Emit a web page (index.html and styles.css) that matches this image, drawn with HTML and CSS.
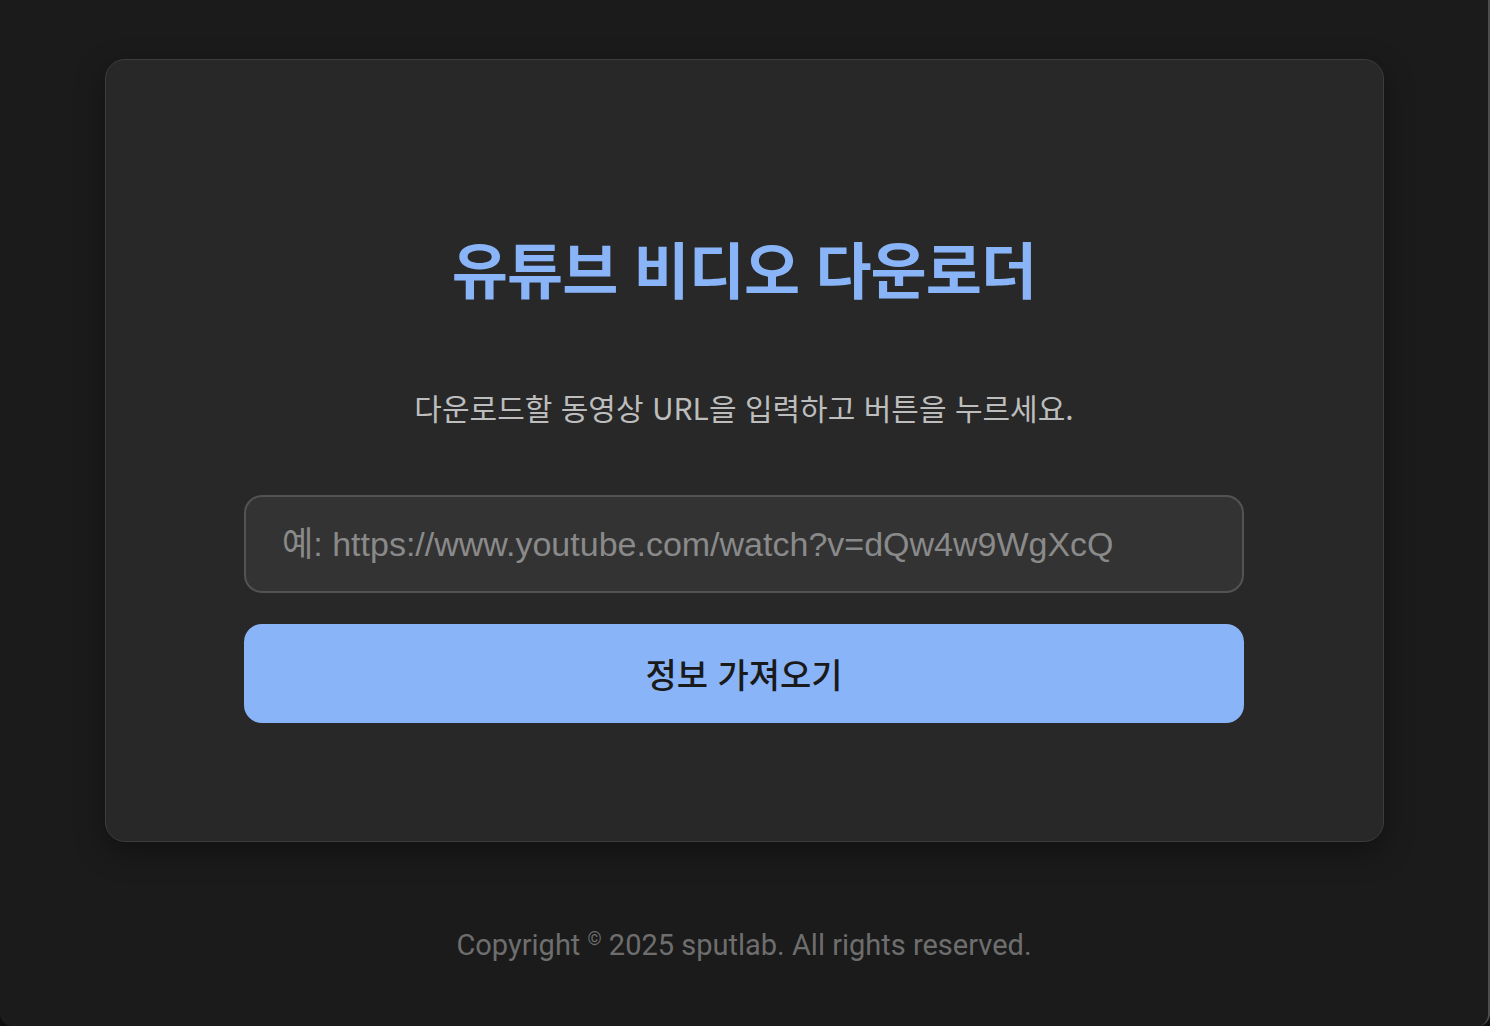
FILE: index.html
```html
<!DOCTYPE html>
<html lang="ko">
<head>
<meta charset="utf-8">
<title>유튜브 비디오 다운로더</title>
<link rel="stylesheet" href="styles.css">
</head>
<body>
<div class="window">
  <main class="card">
    <h1 class="title">유튜브 비디오 다운로더</h1>
    <p class="subtitle">다운로드할 동영상 URL을 입력하고 버튼을 누르세요.</p>
    <form class="form">
      <input class="url-input" type="text" placeholder="예: https://www.youtube.com/watch?v=dQw4w9WgXcQ">
      <button class="fetch-btn" type="button">정보 가져오기</button>
    </form>
  </main>
  <footer class="footer">Copyright <span class="copy">©</span> 2025 sputlab. All rights reserved.</footer>
</div>
</body>
</html>
```
FILE: styles.css
```css
html, body {
  margin: 0;
  padding: 0;
  background: #0e0e0e;
}
.window {
  box-sizing: border-box;
  min-height: 100vh;
  background: #1b1b1b;
  border-right: 2px solid #4d4d4d;
  border-bottom-left-radius: 12px;
  border-bottom-right-radius: 12px;
  display: flex;
  flex-direction: column;
  align-items: center;
  padding-top: 59px;
  font-family: "Noto Sans CJK KR", "Noto Sans", sans-serif;
}
.card {
  box-sizing: border-box;
  width: 1279px;
  background: #282828;
  border: 1px solid #3c3c3c;
  border-radius: 20px;
  box-shadow: 0 10px 30px rgba(0, 0, 0, 0.35);
  padding: 172px 0 118px;
  display: flex;
  flex-direction: column;
  align-items: center;
}
.title {
  margin: 0;
  font-size: 61px;
  line-height: 72px;
  font-weight: 700;
  color: #8ab4f8;
  letter-spacing: -0.9px;
}
.subtitle {
  margin: 83px 0 0;
  font-size: 30px;
  line-height: 40px;
  color: #bdbdbd;
  letter-spacing: 0;
}
.form {
  margin-top: 68px;
  width: 1000px;
  display: flex;
  flex-direction: column;
  gap: 31px;
}
.url-input {
  box-sizing: border-box;
  width: 100%;
  height: 98px;
  padding: 0 36px;
  background: #333333;
  border: 2px solid #535353;
  border-radius: 18px;
  color: #e0e0e0;
  font-family: "Liberation Sans", "Noto Sans CJK KR", sans-serif;
  font-size: 34px;
  outline: none;
}
.url-input::placeholder {
  color: #8a8a8a;
}
.fetch-btn {
  box-sizing: border-box;
  width: 100%;
  height: 99px;
  border: none;
  border-radius: 18px;
  background: #8ab4f8;
  color: #1a1a1a;
  font-family: "Noto Sans CJK KR", sans-serif;
  font-size: 34px;
  font-weight: 500;
  cursor: pointer;
}
.footer {
  margin-top: 83px;
  font-family: "Roboto", "Noto Sans", sans-serif;
  font-size: 29px;
  line-height: 40px;
  color: #6e6e6e;
}
.copy {
  font-size: 0.62em;
  line-height: 0;
  vertical-align: 0.55em;
}
```
